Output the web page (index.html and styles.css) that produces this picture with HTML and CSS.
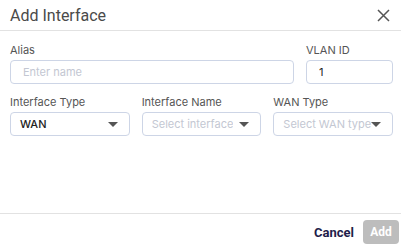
FILE: index.html
```html
<!DOCTYPE html>
<html lang="en">
<head>
<meta charset="UTF-8" />
<meta name="viewport" content="width=device-width, initial-scale=1" />
<title>Add Interface</title>
<link rel="stylesheet" href="styles.css">
</head>
<body>

<div class="modal">
  <div class="modal-header">
    <span class="modal-title">Add Interface</span>
    <button class="close-btn" aria-label="Close">
      <svg width="13" height="13" viewBox="0 0 13 13">
        <path d="M1 1 L12 12 M12 1 L1 12" stroke="#555" stroke-width="1.5" fill="none" />
      </svg>
    </button>
  </div>

  <div class="modal-body">
    <div class="row row-top">
      <div class="field">
        <label>Alias</label>
        <input type="text" placeholder="Enter name" />
      </div>
      <div class="field">
        <label>VLAN ID</label>
        <input type="text" value="1" />
      </div>
    </div>

    <div class="row row-three">
      <div class="field">
        <label>Interface Type</label>
        <div class="select">
          <span class="select-value">WAN</span>
          <span class="caret"></span>
        </div>
      </div>
      <div class="field">
        <label>Interface Name</label>
        <div class="select">
          <span class="select-placeholder">Select interface</span>
          <span class="caret"></span>
        </div>
      </div>
      <div class="field">
        <label>WAN Type</label>
        <div class="select">
          <span class="select-placeholder">Select WAN type</span>
          <span class="caret"></span>
        </div>
      </div>
    </div>
  </div>

  <div class="modal-footer">
    <button class="cancel-btn">Cancel</button>
    <button class="add-btn" disabled>Add</button>
  </div>
</div>

</body>
</html>
```

FILE: styles.css
```css
body {
  margin: 0;
  background: #fff;
  font-family: Inter, "Noto Sans", sans-serif;
}
.modal {
  width: 401px;
  height: 246px;
  display: flex;
  flex-direction: column;
}
.modal-header {
  height: 30px;
  border-bottom: 1px solid #e2e2e2;
  display: flex;
  align-items: center;
  justify-content: space-between;
  padding: 0 11px 0 10px;
}
.modal-title {
  font-family: Roboto, sans-serif;
  font-size: 16px;
  color: #4a4a4a;
}
.close-btn {
  border: none;
  background: none;
  padding: 0;
  display: flex;
  cursor: pointer;
}
.modal-body {
  flex: 1;
  padding: 12px 8px 0 10px;
}
.row {
  display: grid;
  gap: 12px;
  margin-bottom: 11px;
}
.row-top {
  grid-template-columns: 1fr 87px;
}
.row-three {
  grid-template-columns: repeat(3, 1fr);
}
.field {
  display: flex;
  flex-direction: column;
  min-width: 0;
}
label {
  font-size: 11px;
  line-height: 15px;
  color: #555;
  margin-bottom: 2px;
}
input[type="text"] {
  height: 24px;
  box-sizing: border-box;
  border: 1px solid #cdd5e6;
  border-radius: 4px;
  padding: 0 12px;
  font-family: Inter, sans-serif;
  font-size: 11px;
  color: #222;
  outline: none;
  min-width: 0;
}
input::placeholder {
  color: #c3c7d2;
}
.select {
  height: 24px;
  box-sizing: border-box;
  border: 1px solid #cdd5e6;
  border-radius: 4px;
  padding: 0 11px 0 9px;
  display: flex;
  align-items: center;
  justify-content: space-between;
  font-size: 11px;
  white-space: nowrap;
  overflow: hidden;
}
.select-value {
  color: #222;
  font-weight: 500;
}
.select-placeholder {
  color: #c3c7d2;
  overflow: hidden;
}
.caret {
  flex: none;
  width: 0;
  height: 0;
  border-left: 5px solid transparent;
  border-right: 5px solid transparent;
  border-top: 5px solid #555;
}
.modal-footer {
  border-top: 1px solid #e2e2e2;
  display: flex;
  justify-content: flex-end;
  align-items: center;
  gap: 9px;
  padding: 6px 2px 2px 0;
  height: 33px;
  box-sizing: border-box;
}
.cancel-btn {
  border: none;
  background: none;
  padding: 0;
  font-family: Roboto, sans-serif;
  font-weight: bold;
  font-size: 13px;
  color: #1f1d4a;
  cursor: pointer;
}
.add-btn {
  border: none;
  background: #bdbdbd;
  color: #fff;
  font-family: Roboto, sans-serif;
  font-weight: bold;
  font-size: 12px;
  width: 36px;
  height: 24px;
  border-radius: 4px;
  padding: 0;
}
```
